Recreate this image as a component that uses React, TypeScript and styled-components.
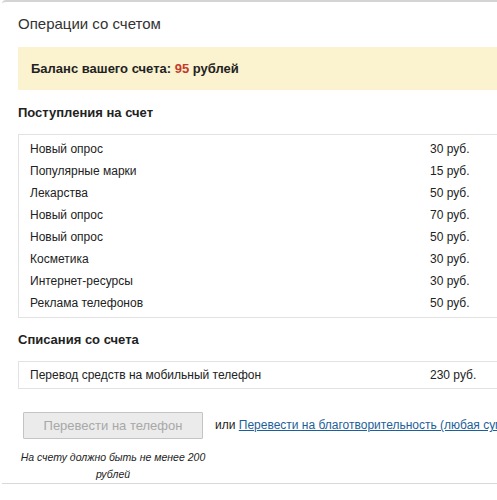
import React from "react";
import styled, { createGlobalStyle } from "styled-components";

const Global = createGlobalStyle`
  html, body { margin: 0; padding: 0; background: #fff; overflow: hidden; }
  body { font-family: "Liberation Sans", Arial, sans-serif; color: #222; }
`;

const Panel = styled.div`
  margin-left: 2px;
  width: 640px;
  border-top: 2px solid #d4d4d4;
  border-top-left-radius: 4px;
  border-bottom: 1px solid #d8d8d8;
  padding: 0 0 0 16px;
  box-sizing: border-box;
`;

const Title = styled.h1`
  margin: 13px 0 0 0;
  font-size: 15px;
  line-height: 18px;
  font-weight: normal;
  color: #333;
`;

const BalanceBox = styled.div`
  margin-top: 14px;
  height: 43px;
  background: #fbf3d0;
  display: flex;
  align-items: center;
  padding-left: 13px;
  font-size: 13px;
  font-weight: bold;
  color: #222;
`;

const Red = styled.span`
  color: #c43a2a;
`;

const SectionTitle = styled.h2<{ $top: number }>`
  margin: ${(p) => p.$top}px 0 0 0;
  font-size: 13px;
  line-height: 16px;
  font-weight: bold;
  color: #222;
`;

const Table = styled.div<{ $top: number; $pad: number }>`
  margin-top: ${(p) => p.$top}px;
  width: 520px;
  border: 1px solid #e2e2e2;
  padding: ${(p) => p.$pad}px 0;
`;

const Row = styled.div<{ $h: number }>`
  display: grid;
  grid-template-columns: 1fr 109px;
  height: ${(p) => p.$h}px;
  align-items: center;
  font-size: 12px;
  color: #222;
  padding-left: 11px;
`;

const Amount = styled.span``;

const Actions = styled.div`
  margin-top: 23px;
  display: flex;
  align-items: flex-start;
  padding-left: 5px;
  white-space: nowrap;
`;

const LeftCol = styled.div`
  display: flex;
  flex-direction: column;
  align-items: center;
  width: 180px;
`;

const Button = styled.button`
  width: 180px;
  height: 27px;
  background: #ebebeb;
  border: 1px solid #c4c4c4;
  border-radius: 1px;
  color: #a8a8a8;
  font-family: "Liberation Sans", Arial, sans-serif;
  font-size: 13px;
  padding: 0;
`;

const Note = styled.div`
  margin-top: 10px;
  width: 200px;
  text-align: center;
  font-size: 10.5px;
  line-height: 17px;
  font-style: italic;
  color: #222;
  white-space: normal;
`;

const OrText = styled.div`
  margin: 6px 0 0 12px;
  font-size: 12px;
  color: #222;
`;

const Link = styled.a`
  color: #1d5f9a;
  text-decoration: underline;
`;

const incomes = [
  ["Новый опрос", "30 руб."],
  ["Популярные марки", "15 руб."],
  ["Лекарства", "50 руб."],
  ["Новый опрос", "70 руб."],
  ["Новый опрос", "50 руб."],
  ["Косметика", "30 руб."],
  ["Интернет-ресурсы", "30 руб."],
  ["Реклама телефонов", "50 руб."],
];

export default function App() {
  return (
    <>
      <Global />
      <Panel>
        <Title>Операции со счетом</Title>
        <BalanceBox>
          <span>
            Баланс вашего счета: <Red>95</Red> рублей
          </span>
        </BalanceBox>
        <SectionTitle $top={15}>Поступления на счет</SectionTitle>
        <Table $top={13} $pad={3}>
          {incomes.map(([n, a], i) => (
            <Row key={i} $h={22}>
              <span>{n}</span>
              <Amount>{a}</Amount>
            </Row>
          ))}
        </Table>
        <SectionTitle $top={14}>Списания со счета</SectionTitle>
        <Table $top={13} $pad={1}>
          <Row $h={24}>
            <span>Перевод средств на мобильный телефон</span>
            <Amount>230 руб.</Amount>
          </Row>
        </Table>
        <Actions>
          <LeftCol>
            <Button>Перевести на телефон</Button>
            <Note>На счету должно быть не менее 200 рублей</Note>
          </LeftCol>
          <OrText>
            или <Link href="#">Перевести на благотворительность (любая сумма)</Link>
          </OrText>
        </Actions>
      </Panel>
    </>
  );
}
